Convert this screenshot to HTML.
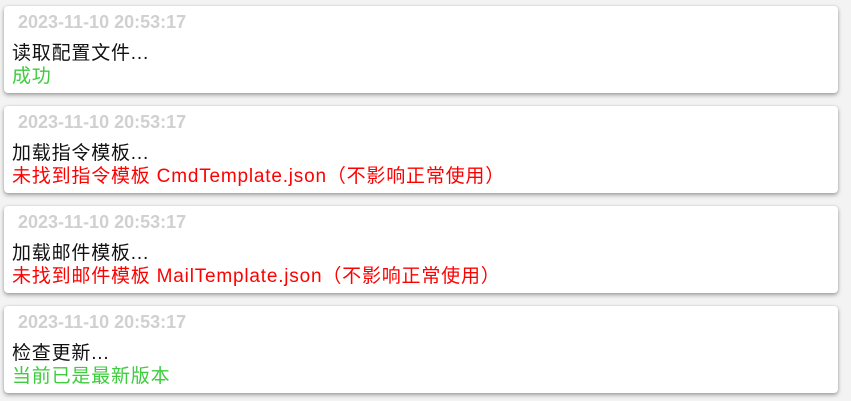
<!DOCTYPE html>
<html><head><meta charset="utf-8"><style>
html,body{margin:0;padding:0;width:851px;height:401px;background:#f3f3f3;overflow:hidden}
.card{position:absolute;left:4px;width:834px;height:87px;background:#fff;border-radius:4px;box-shadow:0 2px 4px rgba(0,0,0,.35),0 0 2px rgba(0,0,0,.1);font-family:"Liberation Sans","Noto Sans CJK SC",sans-serif}
.t{position:absolute;left:14px;top:6px;font-size:18px;font-weight:bold;color:#d0d0d0}
.a{position:absolute;left:8px;top:37px;font-size:19px;letter-spacing:0.8px;color:#111;line-height:22px}
.b{position:absolute;left:8px;top:60px;font-size:19px;letter-spacing:0.8px;line-height:22px}
.g{color:#3ecc3e}.r{color:#f00}
</style></head><body>
<div class="card" style="top:6px"><div class="t">2023-11-10 20:53:17</div><div class="a">读取配置文件...</div><div class="b g">成功</div></div>
<div class="card" style="top:106px"><div class="t">2023-11-10 20:53:17</div><div class="a">加载指令模板...</div><div class="b r">未找到指令模板 CmdTemplate.json（不影响正常使用）</div></div>
<div class="card" style="top:206px"><div class="t">2023-11-10 20:53:17</div><div class="a">加载邮件模板...</div><div class="b r">未找到邮件模板 MailTemplate.json（不影响正常使用）</div></div>
<div class="card" style="top:306px"><div class="t">2023-11-10 20:53:17</div><div class="a">检查更新...</div><div class="b g">当前已是最新版本</div></div>
</body></html>
